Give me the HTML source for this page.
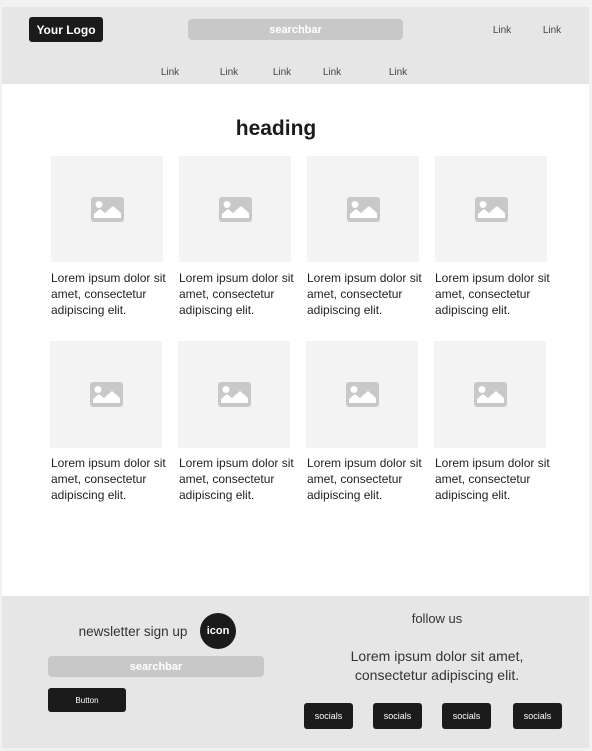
<!DOCTYPE html>
<html><head><style>
*{margin:0;padding:0;box-sizing:border-box}
body{width:592px;height:751px;background:#f2f2f2;font-family:"Liberation Sans",sans-serif;position:relative;overflow:hidden;color:#1b1b1b}
.a{position:absolute}
.hdr{left:2px;top:7px;width:587px;height:77px;background:#e6e6e6}
.main{left:2px;top:84px;width:587px;height:512px;background:#fff}
.ftr{left:2px;top:596px;width:587px;height:152px;background:#e6e6e6}
.blk{background:#1b1b1b;color:#fff;border-radius:3px;display:flex;align-items:center;justify-content:center;font-weight:bold}
.sb{background:#c8c8c8;color:#fff;border-radius:4px;display:flex;align-items:center;justify-content:center;font-weight:bold;font-size:11px}
.lk{font-size:10px;color:#444;transform:translateX(-50%)}
.img{background:#f3f3f3;display:flex;align-items:center;justify-content:center}
.txt{font-size:12px;line-height:16px;color:#222;width:120px}
.c{text-align:center;transform:translateX(-50%);white-space:nowrap}
</style></head><body>
<div class="a hdr"></div><div class="a main"></div><div class="a ftr"></div>
<div class="a blk" style="left:29px;top:17px;width:74px;height:25px;font-size:12px">Your Logo</div>
<div class="a sb" style="left:188px;top:19px;width:215px;height:21px">searchbar</div>
<div class="a lk" style="left:502px;top:25px">Link</div>
<div class="a lk" style="left:552px;top:25px">Link</div>
<div class="a lk" style="left:170px;top:67px">Link</div>
<div class="a lk" style="left:229px;top:67px">Link</div>
<div class="a lk" style="left:282px;top:67px">Link</div>
<div class="a lk" style="left:332px;top:67px">Link</div>
<div class="a lk" style="left:398px;top:67px">Link</div>
<div class="a c" style="left:276px;top:117px;font-size:21px;font-weight:bold">heading</div>
<svg width="0" height="0" style="position:absolute"><symbol id="ic" viewBox="0 0 33 25"><rect width="33" height="25" rx="3" fill="#c8c8c8"/><circle cx="8" cy="7.5" r="3.5" fill="#fff"/><path d="M3 21 L3 17 L9 12 L14 16 L22 9 L30 16 L30 21 Z" fill="#fff"/></symbol></svg>
<div class="a img" style="left:51px;top:156px;width:112px;height:106px"><svg width="33" height="25"><use href="#ic"/></svg></div>
<div class="a img" style="left:179px;top:156px;width:112px;height:106px"><svg width="33" height="25"><use href="#ic"/></svg></div>
<div class="a img" style="left:307px;top:156px;width:112px;height:106px"><svg width="33" height="25"><use href="#ic"/></svg></div>
<div class="a img" style="left:435px;top:156px;width:112px;height:106px"><svg width="33" height="25"><use href="#ic"/></svg></div>
<div class="a txt" style="left:51px;top:270px">Lorem ipsum dolor sit amet, consectetur adipiscing elit.</div>
<div class="a txt" style="left:179px;top:270px">Lorem ipsum dolor sit amet, consectetur adipiscing elit.</div>
<div class="a txt" style="left:307px;top:270px">Lorem ipsum dolor sit amet, consectetur adipiscing elit.</div>
<div class="a txt" style="left:435px;top:270px">Lorem ipsum dolor sit amet, consectetur adipiscing elit.</div>
<div class="a img" style="left:50px;top:341px;width:112px;height:107px"><svg width="33" height="25"><use href="#ic"/></svg></div>
<div class="a img" style="left:178px;top:341px;width:112px;height:107px"><svg width="33" height="25"><use href="#ic"/></svg></div>
<div class="a img" style="left:306px;top:341px;width:112px;height:107px"><svg width="33" height="25"><use href="#ic"/></svg></div>
<div class="a img" style="left:434px;top:341px;width:112px;height:107px"><svg width="33" height="25"><use href="#ic"/></svg></div>
<div class="a txt" style="left:51px;top:455px">Lorem ipsum dolor sit amet, consectetur adipiscing elit.</div>
<div class="a txt" style="left:179px;top:455px">Lorem ipsum dolor sit amet, consectetur adipiscing elit.</div>
<div class="a txt" style="left:307px;top:455px">Lorem ipsum dolor sit amet, consectetur adipiscing elit.</div>
<div class="a txt" style="left:435px;top:455px">Lorem ipsum dolor sit amet, consectetur adipiscing elit.</div>
<div class="a c" style="left:133px;top:624px;font-size:13.5px;color:#333">newsletter sign up</div>
<div class="a blk" style="left:200px;top:613px;width:36px;height:36px;border-radius:50%;font-size:11px">icon</div>
<div class="a sb" style="left:48px;top:656px;width:216px;height:21px">searchbar</div>
<div class="a blk" style="left:48px;top:688px;width:78px;height:24px;font-size:8px;font-weight:normal">Button</div>
<div class="a c" style="left:437px;top:611px;font-size:13px;color:#333">follow us</div>
<div class="a c" style="left:437px;top:647px;font-size:14px;line-height:19px;color:#333;text-align:center">Lorem ipsum dolor sit amet,<br>consectetur adipiscing elit.</div>
<div class="a blk" style="left:304px;top:703px;width:49px;height:26px;font-size:9px;font-weight:normal">socials</div>
<div class="a blk" style="left:373px;top:703px;width:49px;height:26px;font-size:9px;font-weight:normal">socials</div>
<div class="a blk" style="left:442px;top:703px;width:49px;height:26px;font-size:9px;font-weight:normal">socials</div>
<div class="a blk" style="left:513px;top:703px;width:49px;height:26px;font-size:9px;font-weight:normal">socials</div>
</body></html>
